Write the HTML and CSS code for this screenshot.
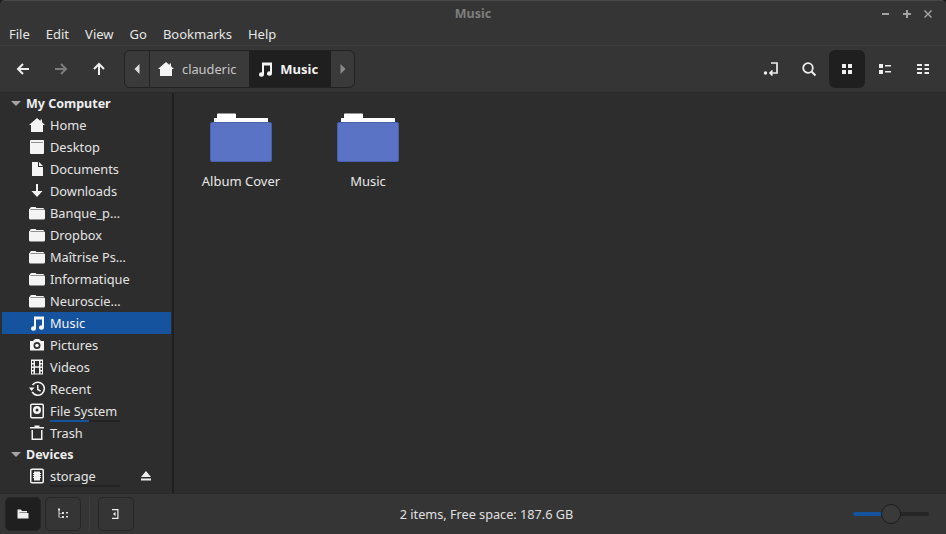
FILE: index.html
```html
<!DOCTYPE html>
<html>

<head>
    <meta charset='utf-8'>
    <title>Music</title>
    <link rel="stylesheet" href="styles.css">
</head>

<body>
    <svg class="defs" width="0" height="0">
        <symbol id="i-home" viewBox="0 0 16 16"><path d="M8 1 11.500 4V2.500H13V5.300L16 8H14V15H2V8H0Z" fill="currentColor"/></symbol>
        <symbol id="i-desktop" viewBox="0 0 16 16"><path d="M2 1H14.500Q15 1 15 2V14Q15 15 14 15H2Q1 15 1 14V2Q1 1 2 1ZM2 3.500V4H14V3.500Z" fill="currentColor" fill-rule="evenodd"/></symbol>
        <symbol id="i-doc" viewBox="0 0 16 16"><path d="M3 1H9V6H14V15H3ZM10 1 14 5H10Z" fill="currentColor"/></symbol>
        <symbol id="i-down" viewBox="0 0 16 16"><path d="M7 1H9V8H13.500L8 14 2.500 8H7Z" fill="currentColor"/></symbol>
        <symbol id="i-folder" viewBox="0 0 16 16"><path d="M1 3.500Q1 2 2.500 2H6.500L7.500 3H14Q15 3 15 4H1.500V4.500H15Q16 4.500 16 5.500V13Q16 14.500 14.500 14.500H1.500Q0 14.500 0 13V4.500Z" fill="currentColor"/></symbol>
        <symbol id="i-music" viewBox="0 0 16 16"><path d="M5 1.500H15V12.500A2.500 2.200 0 1 1 13 10.400V4.500H7V13.500A2.500 2.200 0 1 1 5 11.400Z" fill="currentColor"/></symbol>
        <symbol id="i-camera" viewBox="0 0 16 16"><path d="M1 4H4L6 2H10L12 4H15V13.500H1ZM8 5A3.500 3.500 0 1 0 8 12 3.500 3.500 0 0 0 8 5Z" fill="currentColor" fill-rule="evenodd"/><circle cx="8" cy="8.500" r="1.800" fill="currentColor"/></symbol>
        <symbol id="i-film" viewBox="0 0 16 16"><path d="M2 0.500H14V15.500H2ZM3 2V4H4.500V2ZM3 5.500V7.500H4.500V5.500ZM3 9V11H4.500V9ZM3 12.500V14.500H4.500V12.500ZM11.500 2V4H13V2ZM11.500 5.500V7.500H13V5.500ZM11.500 9V11H13V9ZM11.500 12.500V14.500H13V12.500ZM6 2V7.300H10V2ZM6 8.700V14.500H10V8.700Z" fill="currentColor" fill-rule="evenodd"/></symbol>
        <symbol id="i-recent" viewBox="0 0 16 16"><path d="M3.500 4A6.500 6.500 0 1 1 3.200 11" fill="none" stroke="currentColor" stroke-width="1.600"/><path d="M0 6.500H5.500L2.500 10ZM8 4H9.500V8L12 9.500 11.200 10.700 8 9Z" fill="currentColor"/></symbol>
        <symbol id="i-disk" viewBox="0 0 16 16"><path d="M3 0.500H13Q15 0.500 15 2.500V13.500Q15 15.500 13 15.500H3Q1 15.500 1 13.500V2.500Q1 0.500 3 0.500ZM3 2Q2.500 2 2.500 2.500V13.500Q2.500 14 3 14H13Q13.500 14 13.500 13.500V2.500Q13.500 2 13 2Z" fill="currentColor" fill-rule="evenodd"/><path d="M8 3A4 4 0 1 1 8 11 4 4 0 0 1 8 3ZM8 5.500A1.500 1.500 0 1 0 8 8.500 1.500 1.500 0 0 0 8 5.500Z" fill="currentColor" fill-rule="evenodd"/></symbol>
        <symbol id="i-trash" viewBox="0 0 16 16"><path d="M1 2H5.500V0.500H10.500V2H15V3.500H1ZM2.500 5H4V13.500H12V5H13.500V15H2.500Z" fill="currentColor"/></symbol>
        <symbol id="i-chip" viewBox="0 0 16 16"><path d="M3 0.500H13Q15 0.500 15 2.500V13.500Q15 15.500 13 15.500H3Q1 15.500 1 13.500V2.500Q1 0.500 3 0.500ZM3 2Q2.500 2 2.500 2.500V13.500Q2.500 14 3 14H13Q13.500 14 13.500 13.500V2.500Q13.500 2 13 2Z" fill="currentColor" fill-rule="evenodd"/><path d="M5 3.500H11V5H12V6H11V7H12V8H11V9H12V10H11V12.500H5V10H4V9H5V8H4V7H5V6H4V5H5Z" fill="currentColor"/></symbol>
    </svg>

    <div class="window">
        <div class="titlebar">
            <span class="title">Music</span>
            <div class="wm-buttons">
                <svg width="10" height="10" viewBox="0 0 10 10"><path d="M1 4H8V6H1Z" fill="#a3a3a3"/></svg>
                <svg width="10" height="10" viewBox="0 0 10 10"><path d="M4 1H6V4H9V6H6V9H4V6H1V4H4Z" fill="#a3a3a3"/></svg>
                <svg width="10" height="10" viewBox="0 0 10 10"><path d="M2 1 5 4 8 1 9 2 6 5 9 8 8 9 5 6 2 9 1 8 4 5 1 2Z" fill="#a3a3a3"/></svg>
            </div>
        </div>

        <div class="menubar">
            <span>File</span><span>Edit</span><span>View</span><span>Go</span><span>Bookmarks</span><span>Help</span>
        </div>

        <div class="toolbar">
            <div class="nav-buttons">
                <svg width="16" height="16" viewBox="0 0 16 16"><path d="M14 8H3M8 3 3 8 8 13" fill="none" stroke="#eee" stroke-width="2"/></svg>
                <svg width="16" height="16" viewBox="0 0 16 16"><path d="M2 8H13M8 3 13 8 8 13" fill="none" stroke="#7c7c7c" stroke-width="2"/></svg>
                <svg width="16" height="16" viewBox="0 0 16 16"><path d="M8 14V3M3 8 8 3 13 8" fill="none" stroke="#eee" stroke-width="2"/></svg>
            </div>
            <div class="pathbar">
                <div class="path-arrow left"><svg width="6" height="10" viewBox="0 0 6 10"><path d="M5.500 0V10L0.500 5Z" fill="#ddd"/></svg></div>
                <div class="crumb"><svg class="ico" width="16" height="16"><use href="#i-home"/></svg>clauderic</div>
                <div class="crumb current"><svg class="ico" width="16" height="16"><use href="#i-music"/></svg>Music</div>
                <div class="path-arrow"><svg width="6" height="10" viewBox="0 0 6 10"><path d="M0.500 0V10L5.500 5Z" fill="#8a8a8a"/></svg></div>
            </div>
            <div class="tool-right">
                <div class="tool"><svg width="16" height="16" viewBox="0 0 16 16"><circle cx="2.500" cy="12" r="1.700" fill="#eee"/><path d="M8 2H14V12H7M9.500 9.500 7 12 9.500 14.500" fill="none" stroke="#eee" stroke-width="1.700"/></svg></div>
                <div class="tool"><svg width="16" height="16" viewBox="0 0 16 16"><circle cx="7" cy="7" r="4.800" fill="none" stroke="#eee" stroke-width="1.800"/><path d="M10.500 10.500 14.500 14.500" stroke="#eee" stroke-width="2"/></svg></div>
                <div class="tool active"><svg width="16" height="16" viewBox="0 0 16 16"><path d="M3 3H7V7H3ZM9 3H13V7H9ZM3 9H7V13H3ZM9 9H13V13H9Z" fill="#eee"/></svg></div>
                <div class="tool"><svg width="16" height="16" viewBox="0 0 16 16"><path d="M2 3H6V7H2ZM2 9H6V13H2ZM8 4H14V5.500H8ZM8 10H14V11.500H8Z" fill="#eee"/></svg></div>
                <div class="tool"><svg width="16" height="16" viewBox="0 0 16 16"><path d="M2 3H7V5H2ZM2 7H7V9H2ZM2 11H7V13H2ZM9.500 3H14V5H9.500ZM9.500 7H14V9H9.500ZM9.500 11H14V13H9.500Z" fill="#eee"/></svg></div>
            </div>
        </div>

        <div class="main">
            <div class="sidebar">
                <div class="side-head"><span class="tri"></span>My Computer</div>
                <div class="side-row"><svg class="ico" width="16" height="16"><use href="#i-home"/></svg>Home</div>
                <div class="side-row"><svg class="ico" width="16" height="16"><use href="#i-desktop"/></svg>Desktop</div>
                <div class="side-row"><svg class="ico" width="16" height="16"><use href="#i-doc"/></svg>Documents</div>
                <div class="side-row"><svg class="ico" width="16" height="16"><use href="#i-down"/></svg>Downloads</div>
                <div class="side-row"><svg class="ico" width="16" height="16"><use href="#i-folder"/></svg>Banque_p…</div>
                <div class="side-row"><svg class="ico" width="16" height="16"><use href="#i-folder"/></svg>Dropbox</div>
                <div class="side-row"><svg class="ico" width="16" height="16"><use href="#i-folder"/></svg>Maîtrise Ps…</div>
                <div class="side-row"><svg class="ico" width="16" height="16"><use href="#i-folder"/></svg>Informatique</div>
                <div class="side-row"><svg class="ico" width="16" height="16"><use href="#i-folder"/></svg>Neuroscie…</div>
                <div class="side-row selected"><svg class="ico" width="16" height="16"><use href="#i-music"/></svg>Music</div>
                <div class="side-row"><svg class="ico" width="16" height="16"><use href="#i-camera"/></svg>Pictures</div>
                <div class="side-row"><svg class="ico" width="16" height="16"><use href="#i-film"/></svg>Videos</div>
                <div class="side-row"><svg class="ico" width="16" height="16"><use href="#i-recent"/></svg>Recent</div>
                <div class="side-row"><svg class="ico" width="16" height="16"><use href="#i-disk"/></svg>File System<span class="usage fs"></span></div>
                <div class="side-row"><svg class="ico" width="16" height="16"><use href="#i-trash"/></svg>Trash</div>
                <div class="side-head"><span class="tri"></span>Devices</div>
                <div class="side-row"><svg class="ico" width="16" height="16"><use href="#i-chip"/></svg>storage<span class="usage"></span>
                    <svg class="eject" width="12" height="12" viewBox="0 0 12 12"><path d="M6 1 11 7H1ZM1 8.500H11V10.500H1Z" fill="#eee"/></svg>
                </div>
            </div>

            <div class="files">
                <div class="file">
                    <svg width="62" height="49" viewBox="0 0 62 49"><path d="M7 1Q7 0.500 8 0.500H25Q26 0.500 26 1V5H58V10H4V5H7Z" fill="#fff"/><rect x="0.500" y="9.500" width="61" height="39" rx="1.500" fill="#5a73c4" stroke="#4a60a8"/></svg>
                    <span>Album Cover</span>
                </div>
                <div class="file">
                    <svg width="62" height="49" viewBox="0 0 62 49"><path d="M7 1Q7 0.500 8 0.500H25Q26 0.500 26 1V5H58V10H4V5H7Z" fill="#fff"/><rect x="0.500" y="9.500" width="61" height="39" rx="1.500" fill="#5a73c4" stroke="#4a60a8"/></svg>
                    <span>Music</span>
                </div>
            </div>
        </div>

        <div class="statusbar">
            <div class="status-left">
                <div class="sbtn active"><svg width="12" height="12" viewBox="0 0 12 12"><path d="M0.500 1.500H4L5 3H10V4.500H2.500V5H11.500V10.500H0.500Z" fill="#eee"/></svg></div>
                <div class="sbtn"><svg width="12" height="12" viewBox="0 0 12 12"><path d="M1 0.500H3V2.500H2.500V5H5V4H7V6H5V5.500H2.500V9H5V8H7V10H5V9.500H1.500V2.500H1ZM9 4H11V5.500H9ZM9 8H11V9.500H9Z" fill="#ddd"/></svg></div>
                <div class="sep"></div>
                <div class="sbtn"><svg width="12" height="12" viewBox="0 0 12 12"><path d="M2 1H8.500V11H2V9.800H7.300V2.200H2Z" fill="#eee"/><path d="M5.500 3.800V8.200L3 6Z" fill="#eee"/></svg></div>
            </div>
            <div class="status-text">2 items, Free space: 187.6 GB</div>
            <div class="zoom">
                <div class="track"><div class="fill"></div></div>
                <div class="knob"></div>
            </div>
        </div>
    </div>
</body>
</html>
```

FILE: styles.css
```css
* {
    box-sizing: border-box;
}

html, body {
    height: 100%;
}

body {
    margin: 0;
    background: #1a1a1a;
    overflow: hidden;
    color: #eee;
    font-family: "Noto Sans", "Open Sans", sans-serif;
    font-size: 13px;
}

.defs {
    position: absolute;
}

.window {
    width: 946px;
    height: 534px;
    display: flex;
    flex-direction: column;
    background: #353535;
    border-radius: 5px 5px 0 0;
    border-top: 1px solid #484848;
    overflow: hidden;
}

.ico {
    flex: none;
    color: #f4f4f4;
}

/* title */
.titlebar {
    height: 25px;
    flex: none;
    position: relative;
    display: flex;
    align-items: center;
    justify-content: center;
}

.title {
    color: #7e7e7e;
    font-weight: 700;
    font-size: 12.5px;
}

.wm-buttons {
    position: absolute;
    right: 13px;
    top: 8px;
    display: flex;
    gap: 11px;
}

/* menu */
.menubar {
    height: 20px;
    flex: none;
    display: flex;
    gap: 16px;
    align-items: center;
    padding: 0 0 4px 9px;
    color: #e6e6e6;
    border-bottom: 1px solid #3d3d3d;
}

/* toolbar */
.toolbar {
    height: 47px;
    flex: none;
    display: flex;
    align-items: center;
    border-bottom: 1px solid #2a2a2a;
}

.nav-buttons {
    display: flex;
    gap: 22px;
    padding-left: 15px;
    width: 124px;
}

.pathbar {
    display: flex;
    height: 38px;
    border: 1px solid #222;
    border-radius: 6px;
    background: #3a3a3a;
    overflow: hidden;
}

.path-arrow {
    width: 23px;
    display: flex;
    align-items: center;
    justify-content: center;
}

.path-arrow.left {
    width: 25px;
    border-right: 1px solid #222;
}

.crumb {
    display: flex;
    align-items: center;
    gap: 8px;
    padding: 0 13px 0 8px;
    color: #c8c8c8;
    font-size: 12.8px;
}

.crumb.current {
    background: #1f1f1f;
    color: #f2f2f2;
    font-weight: 700;
    font-size: 13px;
    gap: 7px;
    padding: 0 13px 0 8px;
}

.tool-right {
    margin-left: auto;
    display: flex;
    padding-right: 5px;
}

.tool {
    width: 36px;
    height: 38px;
    border-radius: 6px;
    margin-left: 2px;
    display: flex;
    align-items: center;
    justify-content: center;
}

.tool.active {
    background: #1f1f1f;
}

/* main */
.main {
    flex: 1;
    display: flex;
    min-height: 0;
    background: #2d2d2d;
}

.sidebar {
    width: 174px;
    flex: none;
    padding: 0 1px 0 2px;
    border-right: 2px solid #1f1f1f;
    overflow: hidden;
    font-size: 12.8px;
}

.side-head,
.side-row {
    display: flex;
    align-items: center;
    position: relative;
    white-space: nowrap;
    color: #e4e4e4;
}

.side-head {
    height: 21px;
    padding-left: 9px;
    font-weight: 700;
    font-size: 12.5px;
    color: #eee;
}

.tri {
    width: 0;
    height: 0;
    border-left: 5px solid transparent;
    border-right: 5px solid transparent;
    border-top: 5px solid #a5a5a5;
    margin-right: 5px;
}

.side-row {
    height: 22px;
    padding-left: 27px;
}

.side-row .ico {
    margin-right: 5px;
}

.side-row.selected {
    background: #15539e;
    color: #f4f4f4;
}

.usage {
    position: absolute;
    left: 48px;
    bottom: 0;
    width: 70px;
    height: 2px;
    background: #232323;
}

.usage.fs::before {
    content: "";
    display: block;
    width: 39px;
    height: 2px;
    background: #15539e;
}

.eject {
    position: absolute;
    left: 138px;
    top: 5px;
}

.files {
    flex: 1;
    display: flex;
    align-items: flex-start;
    gap: 1px;
    padding: 20px 0 0 4px;
}

.file {
    width: 126px;
    display: flex;
    flex-direction: column;
    align-items: center;
    gap: 10px;
    color: #e8e8e8;
}

/* status */
.statusbar {
    height: 41px;
    flex: none;
    display: flex;
    align-items: center;
    position: relative;
    background: #353535;
    border-top: 1px solid #2a2a2a;
}

.status-left {
    display: flex;
    align-items: center;
    padding-left: 5px;
    gap: 4px;
}

.sbtn {
    width: 36px;
    height: 34px;
    border: 1px solid #262626;
    border-radius: 5px;
    display: flex;
    align-items: center;
    justify-content: center;
}

.sbtn.active {
    background: #1f1f1f;
}

.sep {
    width: 1px;
    height: 34px;
    background: #3e3e3e;
    margin: 0 4px;
}

.status-text {
    position: absolute;
    left: 0;
    right: 0;
    text-align: center;
    color: #e0e0e0;
    font-size: 12.7px;
    padding-left: 27px;
    pointer-events: none;
}

.zoom {
    margin-left: auto;
    margin-right: 17px;
    width: 76px;
    height: 20px;
    position: relative;
    display: flex;
    align-items: center;
}

.track {
    width: 76px;
    height: 4px;
    border-radius: 2px;
    background: #262626;
}

.fill {
    width: 30px;
    height: 4px;
    border-radius: 2px 0 0 2px;
    background: #15539e;
}

.knob {
    position: absolute;
    left: 28px;
    top: 0;
    width: 20px;
    height: 20px;
    border-radius: 50%;
    background: #3a3a3a;
    border: 1px solid #1b1b1b;
}
```
